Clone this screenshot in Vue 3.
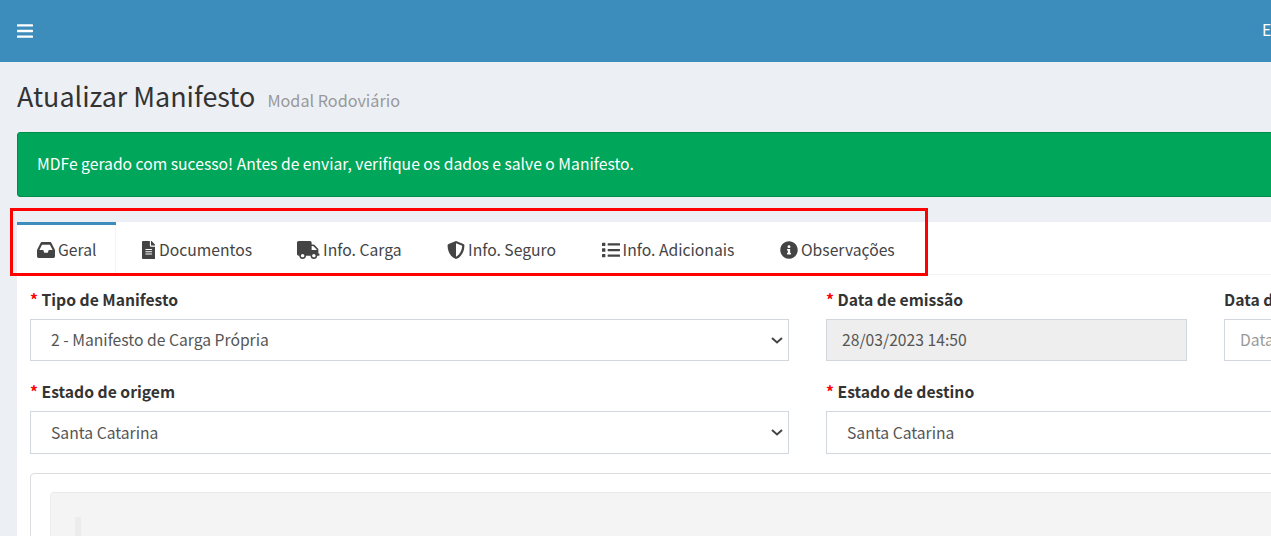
<script setup>
const tabs = [
  { label: 'Geral', vb: '0 64 576 384', w: 18, h: 16, d: 'M567.938 243.908L462.25 85.374A48.003 48.003 0 0 0 422.311 64H153.689a48 48 0 0 0-39.938 21.374L8.062 243.908A47.994 47.994 0 0 0 0 270.533V400c0 26.51 21.49 48 48 48h480c26.51 0 48-21.49 48-48V270.533a47.994 47.994 0 0 0-8.062-26.625zM162.252 128h251.497l85.333 128H376l-32 64H232l-32-64H76.918l85.334-128z' },
  { label: 'Documentos', vb: '0 0 384 512', w: 13.5, h: 18, d: 'M224 136V0H24C10.7 0 0 10.7 0 24v464c0 13.3 10.7 24 24 24h336c13.3 0 24-10.7 24-24V160H248c-13.2 0-24-10.8-24-24zm64 236c0 6.6-5.4 12-12 12H108c-6.6 0-12-5.4-12-12v-8c0-6.6 5.4-12 12-12h168c6.6 0 12 5.4 12 12v8zm0-64c0 6.6-5.4 12-12 12H108c-6.6 0-12-5.4-12-12v-8c0-6.6 5.4-12 12-12h168c6.6 0 12 5.4 12 12v8zm0-72v8c0 6.6-5.4 12-12 12H108c-6.6 0-12-5.4-12-12v-8c0-6.6 5.4-12 12-12h168c6.6 0 12 5.4 12 12zm96-114.1v6.1H256V0h6.1c6.4 0 12.5 2.5 17 7l97.9 98c4.5 4.5 7 10.6 7 16.9z' },
  { label: 'Info. Carga', vb: '0 0 640 512', w: 22.5, h: 18, d: 'M624 352h-16V243.9c0-12.7-5.1-24.9-14.1-33.9L494 110.1c-9-9-21.2-14.1-33.9-14.1H416V48c0-26.5-21.5-48-48-48H48C21.5 0 0 21.5 0 48v320c0 26.5 21.5 48 48 48h16c0 53 43 96 96 96s96-43 96-96h128c0 53 43 96 96 96s96-43 96-96h48c8.8 0 16-7.2 16-16v-32c0-8.8-7.2-16-16-16zM160 464c-26.5 0-48-21.5-48-48s21.5-48 48-48 48 21.5 48 48-21.5 48-48 48zm320 0c-26.5 0-48-21.5-48-48s21.5-48 48-48 48 21.5 48 48-21.5 48-48 48zm80-208H416V144h44.1l99.9 99.9V256z' },
  { label: 'Info. Seguro', vb: '0 0 512 512', w: 18, h: 18, d: 'M466.5 83.7l-192-80a48.15 48.15 0 0 0-36.9 0l-192 80C27.7 91.1 16 108.6 16 128c0 198.5 114.5 335.7 221.5 380.3 11.8 4.9 25.1 4.9 36.9 0C360.1 472.6 496 349.3 496 128c0-19.4-11.7-36.9-29.5-44.3zM256.1 446.3l-.1-381 175.9 73.3c-3.3 151.4-82.1 261.1-175.8 307.7z' },
  { label: 'Info. Adicionais', vb: '0 0 512 512', w: 18, h: 18, d: 'M80 368H16a16 16 0 0 0-16 16v64a16 16 0 0 0 16 16h64a16 16 0 0 0 16-16v-64a16 16 0 0 0-16-16zm0-320H16A16 16 0 0 0 0 64v64a16 16 0 0 0 16 16h64a16 16 0 0 0 16-16V64a16 16 0 0 0-16-16zm0 160H16a16 16 0 0 0-16 16v64a16 16 0 0 0 16 16h64a16 16 0 0 0 16-16v-64a16 16 0 0 0-16-16zm416 176H176a16 16 0 0 0-16 16v32a16 16 0 0 0 16 16h320a16 16 0 0 0 16-16v-32a16 16 0 0 0-16-16zm0-320H176a16 16 0 0 0-16 16v32a16 16 0 0 0 16 16h320a16 16 0 0 0 16-16V80a16 16 0 0 0-16-16zm0 160H176a16 16 0 0 0-16 16v32a16 16 0 0 0 16 16h320a16 16 0 0 0 16-16v-32a16 16 0 0 0-16-16z' },
  { label: 'Observações', vb: '0 0 512 512', w: 18, h: 18, d: 'M256 8C119.043 8 8 119.083 8 256c0 136.997 111.043 248 248 248s248-111.003 248-248C504 119.083 392.957 8 256 8zm0 110c23.196 0 42 18.804 42 42s-18.804 42-42 42-42-18.804-42-42 18.804-42 42-42zm56 254c0 6.627-5.373 12-12 12h-88c-6.627 0-12-5.373-12-12v-24c0-6.627 5.373-12 12-12h12v-64h-12c-6.627 0-12-5.373-12-12v-24c0-6.627 5.373-12 12-12h64c6.627 0 12 5.373 12 12v100h12c6.627 0 12 5.373 12 12v24z' }
]
</script>

<template>
  <div class="page">
    <header class="topbar">
      <svg class="bars" viewBox="0 0 16 14" aria-hidden="true">
        <rect x="0" y="0.2" width="16" height="2.4" rx="0.6" fill="#fff"/>
        <rect x="0" y="5.8" width="16" height="2.4" rx="0.6" fill="#fff"/>
        <rect x="0" y="11.4" width="16" height="2.4" rx="0.6" fill="#fff"/>
      </svg>
      <span class="user">Empresa</span>
    </header>
    <main class="content">
      <h1 class="title"><span>Atualizar Manifesto</span><small>Modal Rodoviário</small></h1>
      <div class="alert">MDFe gerado com sucesso! Antes de enviar, verifique os dados e salve o Manifesto.</div>
      <section class="panel">
        <nav class="tabs">
          <a v-for="(t, i) in tabs" :key="t.label" class="tab" :class="{ active: i === 0, shifted: i > 3 }">
            <svg class="ico" :viewBox="t.vb" preserveAspectRatio="none" :style="{ width: t.w + 'px', height: t.h + 'px' }" aria-hidden="true"><path fill="#444" :d="t.d"/></svg>
            <span>{{ t.label }}</span>
          </a>
        </nav>
        <div class="pane">
          <div class="grid">
            <div class="field span2">
              <label><i>*</i> Tipo de Manifesto</label>
              <select class="ctl"><option>2 - Manifesto de Carga Própria</option></select>
            </div>
            <div class="field">
              <label><i>*</i> Data de emissão</label>
              <input class="ctl" disabled value="28/03/2023 14:50" />
            </div>
            <div class="field">
              <label>Data de saída</label>
              <input class="ctl" placeholder="Data de saída" />
            </div>
            <div class="field span2">
              <label><i>*</i> Estado de origem</label>
              <select class="ctl tall"><option>Santa Catarina</option></select>
            </div>
            <div class="field span2">
              <label><i>*</i> Estado de destino</label>
              <select class="ctl tall"><option>Santa Catarina</option></select>
            </div>
          </div>
          <div class="card">
            <div class="well"><div class="strip"></div></div>
          </div>
        </div>
      </section>
    </main>
    <div class="highlight"></div>
  </div>
</template>

<style scoped>
.page {
  position: relative;
  width: 1271px;
  height: 536px;
  overflow: hidden;
  background: #ecf0f5;
  color: #333;
  font-family: "Noto Sans CJK SC", "Noto Sans", sans-serif;
  font-size: 15.7px;
}
.topbar {
  height: 62px;
  background: #3c8dbc;
  display: flex;
  align-items: center;
  padding-left: 17px;
  box-sizing: border-box;
}
.bars { width: 16px; height: 14px; display: block; }
.user { color: #fff; font-size: 15.7px; line-height: 24px; position: absolute; left: 1262px; top: 18px; }
.content { width: 1615px; padding-left: 17px; box-sizing: border-box; }
.title {
  margin: 0;
  height: 70px;
  display: flex;
  align-items: center;
  gap: 12px;
  font-weight: 400;
  font-size: 26.9px;
  line-height: 40px;
  padding-bottom: 2px;
  box-sizing: border-box;
}
.title small { font-size: 16.2px; color: #999; line-height: 40px; padding-top: 8px; }
.alert {
  height: 65px;
  box-sizing: border-box;
  background: #00a65a;
  border: 1px solid #008d4c;
  border-radius: 3px;
  color: #fff;
  font-size: 15.68px;
  padding: 0 19px 2px;
  display: flex;
  align-items: center;
  margin-bottom: 25px;
}
.panel { background: #fff; }
.tabs {
  display: flex;
  height: 53px;
  box-sizing: border-box;
  border-bottom: 1px solid #f4f4f4;
}
.tab {
  display: flex;
  align-items: center;
  gap: 3.5px;
  padding: 3px 20px 0;
  margin-right: 5px;
  color: #444;
  line-height: 24px;
  height: 52px;
  box-sizing: border-box;
}
.tab.active {
  position: relative;
  gap: 3px;
  padding-right: 18.5px;
  margin-right: 6px;
  border-right: 1px solid #f4f4f4;
}
.tab.active::before {
  content: "";
  position: absolute;
  left: 0;
  right: -1px;
  top: 0;
  height: 3px;
  background: #3c8dbc;
}
.tab.shifted { gap: 3px; }
.tab.shifted .ico { margin-left: 0.6px; }
.ico { display: block; flex: none; }
.pane { padding: 13px 13px 0; }
.grid {
  display: grid;
  grid-template-columns: repeat(4, 361px);
  column-gap: 37px;
}
.span2 { grid-column: span 2; }
.field { margin-bottom: 19px; }
.field label {
  display: block;
  height: 24px;
  line-height: 24px;
  margin-bottom: 7px;
  font-weight: 700;
  color: #333;
}
.field label i { color: #f00; font-style: normal; font-weight: 700; }
.ctl {
  display: block;
  width: 100%;
  height: 42px;
  box-sizing: border-box;
  border: 1px solid #d2d6de;
  border-radius: 0;
  background: #fff;
  padding: 0 15px 2px;
  font-family: inherit;
  font-size: 15.7px;
  color: #555;
  outline: none;
}
.ctl.tall { height: 43px; padding-bottom: 0; }
select.ctl {
  appearance: none;
  padding-left: 20px;
  background-image: url("data:image/svg+xml,%3Csvg xmlns='http://www.w3.org/2000/svg' width='12' height='7' viewBox='0 0 12 7'%3E%3Cpath d='M1 1l5 4.5L11 1' fill='none' stroke='%23444' stroke-width='2'/%3E%3C/svg%3E");
  background-repeat: no-repeat;
  background-position: right 5px center;
}
input.ctl::placeholder { color: #999; opacity: 1; }
input.ctl:disabled { background: #eee; color: #555; opacity: 1; }
.card {
  border: 1px solid #ddd;
  border-radius: 4px;
  padding: 18px 19px;
  height: 200px;
}
.well {
  background: #f4f4f4;
  border: 1px solid #eee;
  border-top-color: #e8e8e8;
  border-radius: 4px;
  height: 200px;
  padding: 24px;
  box-sizing: border-box;
}
.strip { width: 6px; height: 100px; background: #ececec; }
.highlight {
  position: absolute;
  left: 10px;
  top: 208px;
  width: 918px;
  height: 68px;
  box-sizing: border-box;
  border: 3px solid #f00;
  pointer-events: none;
}
</style>

<style>
html, body { margin: 0; overflow: hidden; }
</style>
